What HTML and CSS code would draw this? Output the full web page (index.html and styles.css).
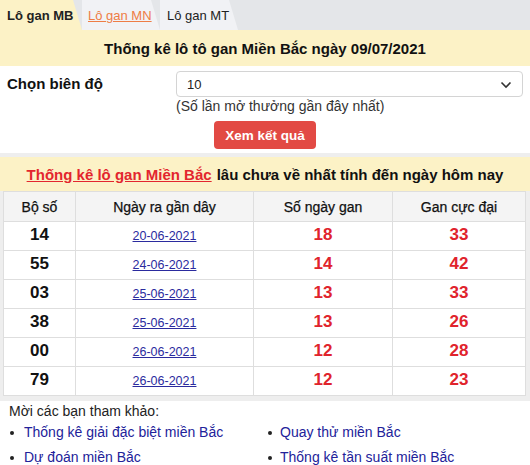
FILE: index.html
```html
<!DOCTYPE html>
<html lang="vi">
<head>
<meta charset="utf-8">
<link rel="stylesheet" href="styles.css">
</head>
<body>
<div class="page">
  <div class="tabs">
    <div class="tab active">Lô gan MB</div>
    <div class="tab"><a class="tab-link" href="#">Lô gan MN</a></div>
    <div class="tab">Lô gan MT</div>
  </div>
  <div class="title">Thống kê lô tô gan Miền Bắc ngày 09/07/2021</div>
  <div class="form">
    <div class="form-row">
      <div class="label">Chọn biên độ</div>
      <div class="field">
        <div class="select">
          <span>10</span>
          <svg class="chev" width="12" height="8" viewBox="0 0 12 8"><path d="M1.5 1.5 L6 6 L10.5 1.5" fill="none" stroke="#333" stroke-width="1.6"/></svg>
        </div>
        <div class="note">(Số lần mở thưởng gần đây nhất)</div>
      </div>
    </div>
    <div class="btn-row"><button class="btn">Xem kết quả</button></div>
  </div>
  <div class="section">
    <div class="heading"><a class="heading-link" href="#">Thống kê lô gan Miền Bắc</a> lâu chưa về nhất tính đến ngày hôm nay</div>
    <table class="stats">
      <colgroup><col class="c1"><col class="c2"><col class="c3"><col class="c4"></colgroup>
      <thead>
        <tr><th>Bộ số</th><th>Ngày ra gần dây</th><th>Số ngày gan</th><th>Gan cực đại</th></tr>
      </thead>
      <tbody>
        <tr><td class="num">14</td><td><a href="#">20-06-2021</a></td><td class="red">18</td><td class="red">33</td></tr>
        <tr><td class="num">55</td><td><a href="#">24-06-2021</a></td><td class="red">14</td><td class="red">42</td></tr>
        <tr><td class="num">03</td><td><a href="#">25-06-2021</a></td><td class="red">13</td><td class="red">33</td></tr>
        <tr><td class="num">38</td><td><a href="#">25-06-2021</a></td><td class="red">13</td><td class="red">26</td></tr>
        <tr><td class="num">00</td><td><a href="#">26-06-2021</a></td><td class="red">12</td><td class="red">28</td></tr>
        <tr><td class="num">79</td><td><a href="#">26-06-2021</a></td><td class="red">12</td><td class="red">23</td></tr>
      </tbody>
    </table>
  </div>
  <div class="refs">
    <div class="refs-title">Mời các bạn tham khảo:</div>
    <ul class="ref-list">
      <li><a href="#">Thống kê giải đặc biệt miền Bắc</a></li>
      <li><a href="#">Quay thử miền Bắc</a></li>
      <li><a href="#">Dự đoán miền Bắc</a></li>
      <li><a href="#">Thống kê tần suất miền Bắc</a></li>
    </ul>
  </div>
</div>
</body>
</html>
```
FILE: styles.css
```css
html, body { margin: 0; padding: 0; background: #fff; }
body { font-family: "Liberation Sans", Arial, sans-serif; color: #111; }
.page { width: 530px; }

.tabs { display: flex; height: 30px; background: #e4e6e9; }
.tab {
  height: 30px; box-sizing: border-box; padding: 8px 0 0 8px;
  font-size: 13px; background: #f1f2f5; color: #222; white-space: nowrap;
  clip-path: polygon(0 0, calc(100% - 9px) 0, 100% 100%, 0 100%);
}
.tab:nth-child(1) { width: 82px; padding-left: 7px; }
.tab:nth-child(2) { width: 78px; padding-left: 6px; }
.tab:nth-child(3) { width: 78px; padding-left: 7px; }
.tab.active { background: #fcf2c6; font-weight: bold; color: #222; }
.tab-link { color: #ee7d45; text-decoration: underline; }

.title {
  height: 36px; background: #fcf2c6; display: flex; align-items: center; justify-content: center;
  font-size: 15px; font-weight: bold; color: #111;
}

.form { padding: 5px 0 4px 0; border-bottom: 4px solid #eeeeee; }
.form-row { display: flex; }
.label { width: 176px; box-sizing: border-box; padding: 4px 0 0 7px; font-size: 15px; font-weight: bold; }
.field { flex: 1; padding-right: 7px; }
.select {
  height: 26px; box-sizing: border-box; border: 1px solid #d4d4d4; border-radius: 4px;
  display: flex; align-items: center; justify-content: space-between; padding: 0 10px 0 10px;
  font-size: 13px; color: #222;
}
.chev { margin-top: 1px; }
.note { font-size: 14px; color: #333; margin-top: 1px; }
.btn-row { display: flex; justify-content: center; margin-top: 7px; }
.btn {
  width: 102px; height: 28px; border: none; border-radius: 4px; background: #e24a44; color: #fff;
  font-family: "Liberation Sans", Arial, sans-serif; font-weight: bold; font-size: 13.5px; padding: 0;
}

.section { background: #eeeeee; padding: 0 3px 5px 3px; }
.heading {
  margin: 0 -3px; height: 34px; background: #fcf2c6; display: flex; align-items: center; justify-content: center;
  font-size: 15px; font-weight: bold; color: #111;
}
.heading-link { color: #e3262e; text-decoration: underline; margin-right: 5px; }

.stats { width: 522px; border-collapse: collapse; background: #fff; table-layout: fixed; }
.c1 { width: 72px; } .c2 { width: 178px; } .c3 { width: 139px; } .c4 { width: 133px; }
.stats th {
  height: 29px; padding: 0; background: #f4f4f4; border: 1px solid #dedede;
  font-size: 14px; font-weight: normal; color: #111; -webkit-text-stroke: 0.25px #111;
}
.stats td { height: 26px; padding: 0 0 2px 0; border: 1px solid #dedede; text-align: center; }
.stats td a { font-size: 12.5px; color: #2b2b9e; text-decoration: underline; }
.num { font-size: 17px; font-weight: bold; color: #111; }
.red { font-size: 17px; font-weight: bold; color: #e0232c; }

.refs { padding: 2px 0 0 9px; }
.refs-title { font-size: 14px; color: #222; }
.ref-list {
  list-style: none; margin: 4px 0 0 0; padding: 0;
  display: grid; grid-template-columns: 258px 1fr; row-gap: 6px;
}
.ref-list li { font-size: 14px; line-height: 19px; position: relative; padding-left: 15px; }
.ref-list li::before {
  content: ""; position: absolute; left: 1px; top: 8px; width: 4px; height: 4px; border-radius: 50%; background: #222;
}
.ref-list li:nth-child(even) { padding-left: 13px; }
.ref-list a { color: #22229a; text-decoration: none; }
```
